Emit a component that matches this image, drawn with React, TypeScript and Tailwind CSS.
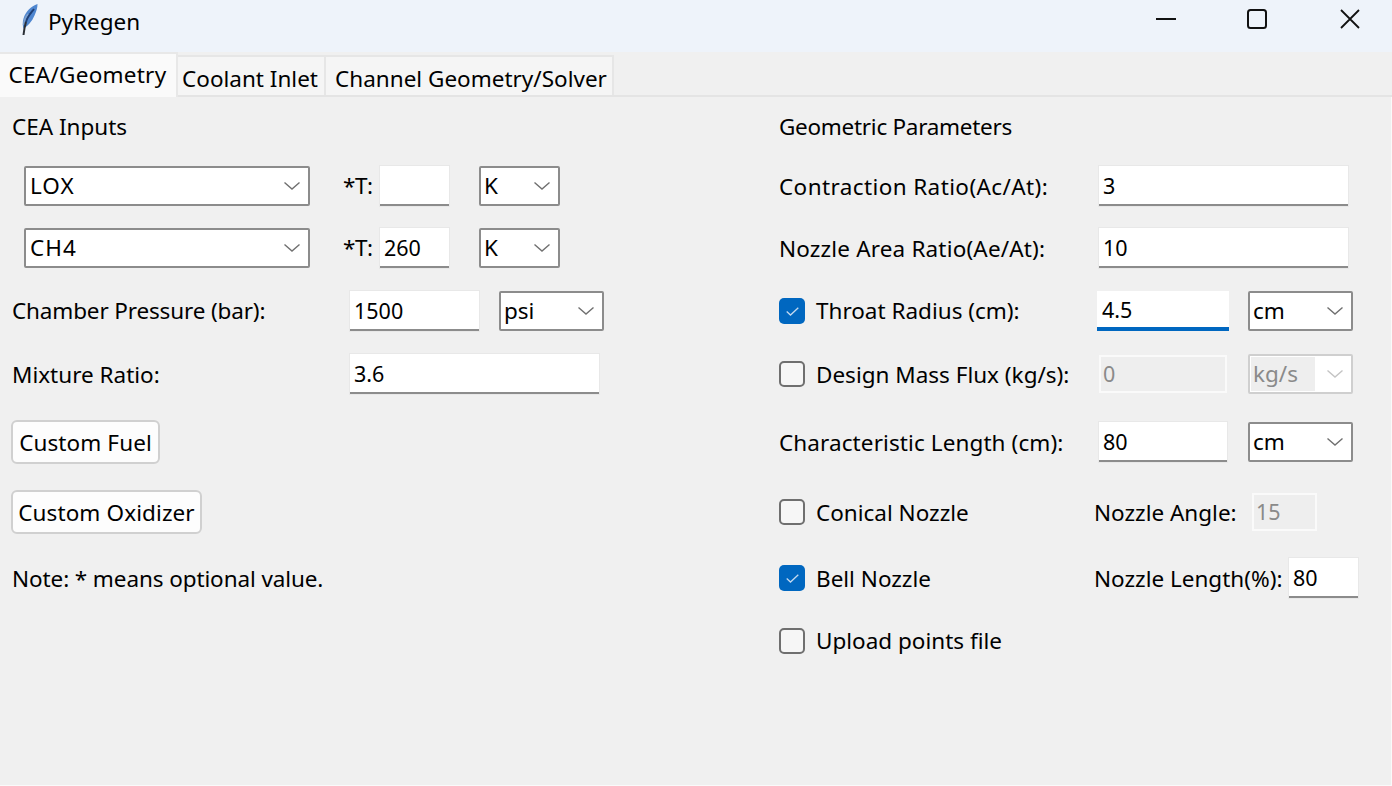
import React from "react";

const FONT = "font-['Noto_Sans','Open_Sans',sans-serif]";

function Chevron({ disabled }: { disabled?: boolean }) {
  return (
    <svg width="18" height="10" viewBox="0 0 18 10" className="shrink-0">
      <path d="M1.5 1.5 9 8l7.5-6.5" fill="none" stroke={disabled ? "#c4c4c4" : "#707070"} strokeWidth="1.4" />
    </svg>
  );
}

function Select({ value, className, disabled }: { value: string; className: string; disabled?: boolean }) {
  return (
    <div
      className={`flex h-[40px] items-center justify-between rounded-[2px] border-2 bg-white pr-[7px] ${
        disabled ? "border-[#cfcfcf] text-[#8a8a8a]" : "border-[#8c8c8c] text-black"
      } ${className}`}
    >
      {disabled ? (
        <span className="ml-[1px] flex h-[34px] w-[64px] items-center bg-[#eeeeee] pl-[2px]">{value}</span>
      ) : (
        <span className="pl-[3px]">{value}</span>
      )}
      <Chevron disabled={disabled} />
    </div>
  );
}

function Input({ value, className, focused }: { value?: string; className: string; focused?: boolean }) {
  return (
    <div
      className={`flex h-[40px] items-center bg-white pt-[2px] text-[21.5px] text-black ${
        focused ? "border-b-[4px] border-[#0067c0] pl-[5px]" : "border-b-2 border-[#8c8c8c] pl-[4px] shadow-[0_0_0_1px_#e8e8e8]"
      } ${className}`}
    >
      {value}
    </div>
  );
}

function DisabledInput({ value, className }: { value: string; className: string }) {
  return (
    <div className={`flex h-[38px] items-center border-2 border-[#fafafa] bg-[#eeeeee] pl-[2px] text-[21.5px] text-[#8a8a8a] ${className}`}>
      {value}
    </div>
  );
}

function Check({ checked, label, raised }: { checked?: boolean; label: string; raised?: boolean }) {
  return (
    <div className="flex items-center">
      {checked ? (
        <div className="flex h-[26px] w-[26px] items-center justify-center rounded-[5px] bg-[#0067c0]">
          <svg width="13" height="9" viewBox="0 0 13 9">
            <path d="M.7 4.500 4.500 8 12.300.7" fill="none" stroke="#c3d9ef" strokeWidth="1.3" />
          </svg>
        </div>
      ) : (
        <div className="h-[26px] w-[26px] rounded-[5px] border-2 border-[#6f6f6f] bg-[#f6f6f6]" />
      )}
      <span className={raised ? "ml-[11px]" : "ml-[11px] pt-[1px]"}>{label}</span>
    </div>
  );
}

function Button({ label, className }: { label: string; className: string }) {
  return (
    <div className={`flex h-[44px] items-center justify-center rounded-[6px] border-2 border-[#d0d0d0] bg-[#fdfdfd] pt-[1px] tracking-[0.1px] ${className}`}>
      {label}
    </div>
  );
}

function Feather() {
  return (
    <svg width="20" height="34" viewBox="0 0 20 34">
      <path d="M18.500 1C12 3 6.500 9 4.500 15.500 3.500 19 3.500 22.500 4.500 25.500 9 23 13 18.500 15.500 12.500 17.500 8 18.500 4.500 18.500 1Z" fill="#4f86cf" />
      <path d="M15 6C11 11 8 14 7 19" fill="none" stroke="#1f3f75" strokeWidth="2" />
      <path d="M9 11C6.500 14 5 18 4.500 22" fill="none" stroke="#7d9fcb" strokeWidth="1.500" />
      <path d="M7 19C5.800 23 5 27 4.500 32" fill="none" stroke="#2b2f36" strokeWidth="2" />
    </svg>
  );
}

function TitleBar() {
  return (
    <div className="flex h-[52px] items-start bg-[#eef3fa] text-black">
      <div className="ml-[19px] mt-[3px] flex w-[20px] items-center">
        <Feather />
      </div>
      <span className="ml-[9px] mt-[7px] text-[22.5px] leading-[30px]">PyRegen</span>
      <div className="ml-auto mt-[9px] flex items-center">
        <svg width="20" height="20" viewBox="0 0 20 20" className="mr-[71px]">
          <path d="M0 10h20" stroke="#111" strokeWidth="2" />
        </svg>
        <svg width="20" height="20" viewBox="0 0 20 20" className="mr-[73px]">
          <rect x="1" y="1" width="18" height="18" rx="2.500" fill="none" stroke="#111" strokeWidth="2" />
        </svg>
        <svg width="20" height="20" viewBox="0 0 20 20" className="mr-[32px]">
          <path d="M1 1l18 18M19 1 1 19" stroke="#111" strokeWidth="1.800" />
        </svg>
      </div>
    </div>
  );
}

function Tabs() {
  return (
    <div className="flex h-[45px] items-end border-b-2 border-[#e4e4e4]">
      <div className="-mb-[2px] flex h-[45px] w-[178px] items-center justify-center border-r-2 border-t-2 border-[#e8e8e8] bg-[#fafafa] pb-[1px] pr-[1px] tracking-[0.25px]">
        CEA/Geometry
      </div>
      <div className="flex h-[40px] w-[148px] items-center justify-center border-r-2 border-t-2 border-[#e6e6e6] bg-[#f5f5f5] pr-[2px] pt-[5px]">
        Coolant Inlet
      </div>
      <div className="flex h-[40px] w-[288px] items-center justify-center border-r-2 border-t-2 border-[#e6e6e6] bg-[#f5f5f5] pl-[4px] pt-[5px]">
        Channel Geometry/Solver
      </div>
    </div>
  );
}

function LeftColumn() {
  return (
    <div className="flex w-[779px] flex-col pl-[12px]">
      <div className="mt-[15px] h-[30px] leading-[30px]">CEA Inputs</div>

      <div className="ml-[12px] mt-[24px] flex h-[40px] items-center">
        <Select value="LOX" className="w-[286px] pl-[1px] tracking-[1px]" />
        <span className="ml-[33px] w-[37px] tracking-[-0.5px]">*T:</span>
        <Input className="w-[69px]" />
        <Select value="K" className="ml-[30px] w-[81px]" />
      </div>
      <div className="ml-[12px] mt-[22px] flex h-[40px] items-center">
        <Select value="CH4" className="w-[286px] pl-[1px] tracking-[1px]" />
        <span className="ml-[33px] w-[37px] tracking-[-0.5px]">*T:</span>
        <Input value="260" className="w-[69px]" />
        <Select value="K" className="ml-[30px] w-[81px]" />
      </div>

      <div className="mt-[23px] flex h-[40px] items-center">
        <span className="w-[338px] tracking-[-0.15px]">Chamber Pressure (bar):</span>
        <Input value="1500" className="w-[129px]" />
        <Select value="psi" className="ml-[20px] w-[105px]" />
      </div>
      <div className="mt-[23px] flex h-[40px] items-center">
        <span className="w-[338px] pt-[1px]">Mixture Ratio:</span>
        <Input value="3.6" className="w-[249px]" />
      </div>

      <Button label="Custom Fuel" className="-ml-[1px] mt-[26px] w-[149px]" />
      <Button label="Custom Oxidizer" className="-ml-[1px] mt-[26px] w-[191px]" />

      <div className="mt-[30px] h-[30px] leading-[30px] tracking-[-0.1px]">Note: * means optional value.</div>
    </div>
  );
}

function RightColumn() {
  return (
    <div className="flex flex-1 flex-col">
      <div className="mt-[15px] h-[30px] leading-[30px] tracking-[-0.28px]">Geometric Parameters</div>

      <div className="mt-[24px] flex h-[40px] items-center">
        <span className="w-[320px] pt-[1px] tracking-[0.4px]">Contraction Ratio(Ac/At):</span>
        <Input value="3" className="w-[249px]" />
      </div>
      <div className="mt-[22px] flex h-[40px] items-center">
        <span className="w-[320px] pt-[1px] tracking-[0.17px]">Nozzle Area Ratio(Ae/At):</span>
        <Input value="10" className="w-[249px]" />
      </div>

      <div className="mt-[23px] flex h-[40px] items-center">
        <div className="w-[318px]">
          <Check checked raised label="Throat Radius (cm):" />
        </div>
        <Input value="4.5" focused className="w-[132px]" />
        <Select value="cm" className="ml-[19px] w-[105px]" />
      </div>
      <div className="mt-[23px] flex h-[40px] items-center">
        <div className="w-[320px]">
          <Check label="Design Mass Flux (kg/s):" />
        </div>
        <DisabledInput value="0" className="w-[128px]" />
        <Select value="kg/s" disabled className="ml-[21px] w-[105px]" />
      </div>

      <div className="mt-[28px] flex h-[40px] items-center">
        <span className="w-[320px] pt-[1px] tracking-[0.1px]">Characteristic Length (cm):</span>
        <Input value="80" className="w-[128px]" />
        <Select value="cm" className="ml-[21px] w-[105px]" />
      </div>

      <div className="mt-[30px] flex h-[40px] items-center">
        <div className="w-[315px]">
          <Check label="Conical Nozzle" />
        </div>
        <span className="w-[158px] pt-[1px]">Nozzle Angle:</span>
        <DisabledInput value="15" className="w-[65px]" />
      </div>
      <div className="mt-[26px] flex h-[40px] items-center">
        <div className="w-[315px]">
          <Check checked label="Bell Nozzle" />
        </div>
        <span className="w-[195px] pt-[1px]">Nozzle Length(%):</span>
        <Input value="80" className="w-[69px]" />
      </div>

      <div className="mt-[23px] flex h-[40px] items-center">
        <Check raised label="Upload points file" />
      </div>
    </div>
  );
}

export default function App() {
  return (
    <div className={`flex h-[786px] w-[1392px] flex-col overflow-hidden bg-[#f0f0f0] text-[22.5px] text-black ${FONT}`}>
      <TitleBar />
      <Tabs />
      <div className="flex flex-1 border-b border-r border-[#fafafa]">
        <LeftColumn />
        <RightColumn />
      </div>
    </div>
  );
}
